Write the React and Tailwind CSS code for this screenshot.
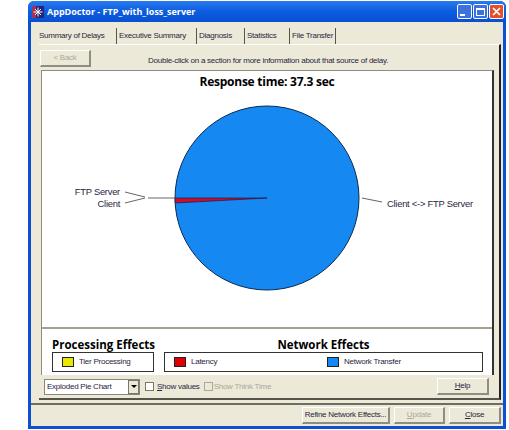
const ui = "font-['Liberation_Sans',Arial,sans-serif] text-[8px] tracking-[-0.25px] text-[#2a2540]";
const heading = "font-['Open_Sans',sans-serif] text-[11.5px] font-bold tracking-normal leading-[14px] text-black";

function XpButton({ children, disabled, className = "" }) {
  return (
    <div
      className={`flex h-[17px] items-center justify-center whitespace-nowrap border-t border-l border-t-white border-l-white border-r-2 border-b-2 border-r-[#8f8d80] border-b-[#8f8d80] bg-[#ece9d8] ${
        disabled ? "text-[#aca899]" : ""
      } ${className}`}
    >
      {children}
    </div>
  );
}

function Tab({ label, active, className = "" }) {
  return (
    <div
      className={`flex h-[16px] items-center whitespace-nowrap ${
        active ? "" : "border-l border-l-[#55534a] pl-[2px]"
      } ${className}`}
    >
      {label}
    </div>
  );
}

function Swatch({ color }) {
  return <div className={`h-[10px] w-[12px] shrink-0 border border-[#222] ${color}`} />;
}

function Pie() {
  return (
    <svg width="452" height="256" viewBox="42 71 452 256" className="block">
      <circle cx="267" cy="198" r="92" fill="#1688f2" stroke="#0b2a52" strokeWidth="1" />
      <path d="M267 198 L175 198 A92 92 0 0 0 175.2 203 Z" fill="#c8102e" stroke="#1a1a40" strokeWidth="0.7" />
      <path d="M148 198 H175 M125 192 L145 197 M125 203 L145 198 M362 198 L382 202" stroke="#666" strokeWidth="1" fill="none" />
      <text x="267" y="86" textAnchor="middle" fontFamily="'Open Sans',sans-serif" fontWeight="700" fontSize="12" fill="#000">
        Response time: 37.3 sec
      </text>
      <g fontFamily="'Liberation Sans',Arial,sans-serif" fontSize="9.4" fill="#2a2540">
        <text x="120" y="195" textAnchor="end">FTP Server</text>
        <text x="120" y="207" textAnchor="end">Client</text>
        <text x="387" y="207">{"Client <-> FTP Server"}</text>
      </g>
    </svg>
  );
}

function TitleBar() {
  return (
    <div className="flex h-[21px] items-center rounded-t-[6px] bg-gradient-to-b from-[#2a7af0] via-[#0b5ce0] to-[#0a50d0] pl-[4px] pr-[2px]">
      <svg width="12" height="12" viewBox="0 0 12 12" className="shrink-0">
        <rect width="12" height="12" fill="#24247a" />
        <rect x="0" y="0" width="4" height="12" fill="#a83050" />
        <path d="M6 1.5V10.5M1.5 6H10.5M3 3L9 9M9 3L3 9" stroke="#fff" strokeWidth="1" />
      </svg>
      <span className="ml-[3px] whitespace-nowrap font-['Open_Sans',sans-serif] text-[9px] font-bold tracking-normal text-white">
        AppDoctor - FTP_with_loss_server
      </span>
      <div className="ml-auto flex gap-[1px]">
        <div className="flex h-[15px] w-[15px] items-end rounded-[2px] border border-white bg-[#3c72e0] p-[2px]">
          <div className="h-[2px] w-[5px] bg-white" />
        </div>
        <div className="flex h-[15px] w-[15px] items-center justify-center rounded-[2px] border border-white bg-[#3c72e0]">
          <div className="h-[8px] w-[9px] border border-t-2 border-white" />
        </div>
        <div className="flex h-[15px] w-[15px] items-center justify-center rounded-[2px] border border-white bg-[#e0502c]">
          <svg width="9" height="9" viewBox="0 0 9 9">
            <path d="M1 1L8 8M8 1L1 8" stroke="#fff" strokeWidth="1.7" />
          </svg>
        </div>
      </div>
    </div>
  );
}

export default function App() {
  return (
    <div className={`h-[430px] w-[509px] bg-white pb-[1px] pl-[28px] pr-[3px] pt-[1px] ${ui}`}>
      <div className="flex h-full flex-col rounded-t-[6px] bg-[#0a50d0] px-[3px] pb-[3px]">
        <div className="-mx-[3px]">
          <TitleBar />
        </div>
        <div className="flex min-h-0 flex-1 flex-col bg-[#ece9d8]">
          <div className="flex h-[22px] items-end pl-[8px]">
            <Tab label="Summary of Delays" active className="w-[77px]" />
            <Tab label="Executive Summary" className="w-[80px]" />
            <Tab label="Diagnosis" className="w-[48px]" />
            <Tab label="Statistics" className="w-[45px]" />
            <Tab label="File Transfer" className="w-[47px] border-r border-r-[#55534a]" />
          </div>

          <div className="ml-[8px] mr-[2px] flex h-[356px] flex-col border-b-2 border-r-2 border-t border-b-[#55534a] border-r-[#222] border-t-white pl-[1px] pr-[5px]">
            <div className="flex h-[25px] items-center pt-[3px]">
              <XpButton disabled className="w-[51px]">&lt; Back</XpButton>
              <div className="ml-[57px] whitespace-nowrap pt-[5px]">Double-click on a section for more information about that source of delay.</div>
            </div>

            <div className="ml-[1px] flex h-[306px] flex-col border-l border-r-2 border-t border-[#8f8d80] border-r-[#333] bg-white">
              <Pie />
              <div className="h-[2px] bg-[#a5a294]" />
              <div className="flex flex-1 gap-[10px] pl-[10px] pr-[9px] pt-[9px]">
                <div className="w-[102px]">
                  <div className={`h-[14px] whitespace-nowrap ${heading}`}>Processing Effects</div>
                  <div className="flex h-[20px] items-center gap-[5px] border border-[#333] pl-[9px]">
                    <Swatch color="bg-[#e8e800]" />
                    Tier Processing
                  </div>
                </div>
                <div className="flex-1">
                  <div className={`h-[14px] text-center ${heading}`}>Network Effects</div>
                  <div className="flex h-[20px] items-center border border-[#333] pl-[9px]">
                    <div className="flex w-[153px] items-center gap-[5px]">
                      <Swatch color="bg-[#e00000]" />
                      Latency
                    </div>
                    <div className="flex items-center gap-[5px]">
                      <Swatch color="bg-[#1688f2]" />
                      Network Transfer
                    </div>
                  </div>
                </div>
              </div>
            </div>

            <div className="flex h-[23px] items-center pl-[4px] pr-[4px]">
              <div className="flex h-[16px] w-[96px] items-center border border-[#8a8778] bg-white pl-[2px]">
                <span className="flex-1">Exploded Pie Chart</span>
                <div className="flex h-[14px] w-[11px] items-center justify-center border border-[#77766c] bg-[#ece9d8]">
                  <div className="h-0 w-0 border-x-[3px] border-t-[3px] border-x-transparent border-t-black" />
                </div>
              </div>
              <div className="ml-[5px] h-[9px] w-[9px] border border-[#77766c] bg-white" />
              <span className="ml-[3px]"><u>S</u>how values</span>
              <div className="ml-[4px] h-[9px] w-[9px] border border-[#aca899] bg-[#ece9d8]" />
              <span className="ml-[1px] text-[#aca899]">Show Think Time</span>
              <XpButton className="ml-auto mr-[1px] w-[52px]"><span><u>H</u>elp</span></XpButton>
            </div>
          </div>

          <div className="mt-[3px] h-[2px] bg-[#6f6d62]" />

          <div className="flex flex-1 items-center justify-end gap-[4px] pr-[2px]">
            <XpButton className="w-[88px]">Refine Network Effects...</XpButton>
            <XpButton disabled className="w-[51px]"><span><u>U</u>pdate</span></XpButton>
            <XpButton className="w-[52px]"><span><u>C</u>lose</span></XpButton>
          </div>
        </div>
      </div>
    </div>
  );
}
